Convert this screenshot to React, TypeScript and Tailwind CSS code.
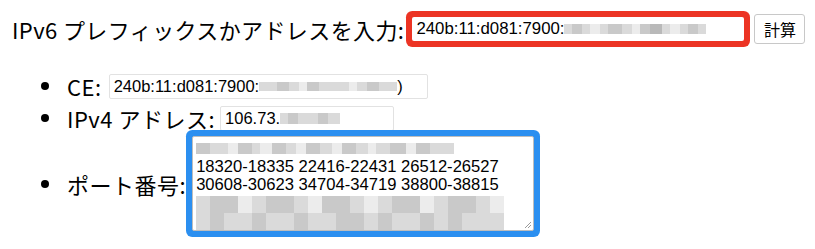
const shade = [
  "bg-white",
  "bg-[#ececec]",
  "bg-[#dadada]",
  "bg-[#c9c9c9]",
  "bg-[#b9b9b9]",
  "bg-[#a9a9a9]",
];

// a blurred run of text: each pair is [width px, shade index]
function Mosaic({ cells, h }: { cells: [number, number][]; h: string }) {
  return (
    <span className={`inline-flex ${h} align-middle`}>
      {cells.map(([w, s], i) => (
        <span key={i} className={`${shade[s]} h-full`} style={{ width: w }} />
      ))}
    </span>
  );
}

function MosaicGrid({ rows }: { rows: number[][] }) {
  return (
    <div className="flex flex-col">
      {rows.map((r, i) => (
        <div key={i} className="flex h-[17px]">
          {r.map((s, j) => (
            <span key={j} className={`${shade[s]} w-[14px] h-full`} />
          ))}
        </div>
      ))}
    </div>
  );
}

const labelFont = { fontFamily: '"Noto Sans CJK JP", "Noto Sans", sans-serif' };
const inputFont = { fontFamily: '"Liberation Sans", Arial, sans-serif' };

export default function App() {
  return (
    <div className="w-[815px] h-[249px] bg-white text-black overflow-hidden" style={labelFont}>
      <div className="flex items-center h-[36px] mt-[11px] pl-[12px]">
        <span className="text-[22px] leading-none tracking-[0.4px]">IPv6 プレフィックスかアドレスを入力:</span>
        <div
          className="ml-[8px] w-[332px] h-[24px] rounded-[2px] bg-white ring-[6px] ring-[#ec3424] flex items-center pl-[4px] text-[16.8px] overflow-hidden"
          style={inputFont}
        >
          <span>240b:11:d081:7900:</span>
          <Mosaic
            h="h-[10px]"
            cells={[[8, 2], [10, 3], [8, 2], [10, 1], [8, 2], [14, 3], [10, 2], [8, 1], [10, 3], [12, 4], [8, 2], [10, 1], [8, 2], [10, 3], [8, 2]]}
          />
        </div>
        <button
          className="ml-[10px] w-[51px] h-[30px] border border-[#c8c8c8] rounded-[3px] bg-white text-[16px] leading-none flex items-center justify-center"
          style={labelFont}
        >
          計算
        </button>
      </div>

      <ul className="mt-[23px] flex flex-col text-[22px] leading-none tracking-[0.5px]">
        <li className="flex items-center h-[32px]">
          <span className="ml-[41px] w-[8px] h-[8px] rounded-full bg-black" />
          <span className="ml-[18px]">CE:</span>
          <div
            className="ml-[7px] w-[319px] h-[25px] border border-[#e2e2e2] rounded-[2px] flex items-center pl-[4px] text-[16.5px] tracking-normal overflow-hidden"
            style={inputFont}
          >
            <span>240b:11:d081:7900:</span>
            <Mosaic
              h="h-[9px]"
              cells={[[10, 2], [8, 2], [12, 3], [10, 2], [8, 1], [12, 3], [8, 2], [10, 2], [12, 2], [8, 1], [10, 2], [12, 3], [10, 2], [8, 2]]}
            />
            <span>)</span>
          </div>
        </li>
        <li className="flex items-center h-[32px]">
          <span className="ml-[41px] w-[8px] h-[8px] rounded-full bg-black" />
          <span className="ml-[18px]">IPv4 アドレス:</span>
          <div
            className="ml-[5px] w-[174px] h-[25px] border border-[#e2e2e2] rounded-[2px] flex items-center pl-[4px] text-[16.5px] tracking-normal overflow-hidden"
            style={inputFont}
          >
            <span>106.73.</span>
            <Mosaic h="h-[11px]" cells={[[8, 2], [10, 3], [12, 2], [8, 2], [10, 3], [12, 2]]} />
          </div>
        </li>
        <li className="flex items-center h-[95px] mt-[2px]">
          <span className="ml-[41px] w-[8px] h-[8px] rounded-full bg-black" />
          <span className="ml-[18px]">ポート番号:</span>
          <div
            className="relative ml-[6px] w-[342px] h-[95px] border border-[#bdbdbd] rounded-[2px] bg-white ring-[6px] ring-[#2b8ff0] pl-[3px] pt-[2px] text-[16.6px] leading-[18.5px] tracking-normal"
            style={inputFont}
          >
            <div className="h-[18.5px] flex items-center">
              <Mosaic
                h="h-[11px]"
                cells={[[14, 3], [4, 2], [14, 2], [10, 1], [14, 3], [8, 2], [12, 1], [14, 3], [10, 2], [10, 1], [14, 3], [12, 2], [10, 1], [14, 3], [12, 2], [8, 1], [14, 2], [16, 3], [10, 1], [14, 3], [16, 2], [8, 2]]}
              />
            </div>
            <div>18320-18335 22416-22431 26512-26527</div>
            <div>30608-30623 34704-34719 38800-38815</div>
            <div className="mt-[1px]">
              <MosaicGrid
                rows={[
                  [2, 3, 3, 1, 2, 3, 3, 2, 1, 3, 3, 2, 1, 2, 3, 3, 1, 2, 3, 3, 2, 1],
                  [2, 3, 2, 2, 3, 2, 2, 3, 2, 2, 3, 3, 2, 3, 2, 2, 3, 2, 3, 2, 2, 2],
                ]}
              />
            </div>
            <svg className="absolute right-[1px] bottom-[1px]" width="9" height="9" viewBox="0 0 9 9">
              <path d="M8 2 L2 8 M8 5 L5 8" stroke="#9a9a9a" strokeWidth="1" />
            </svg>
          </div>
        </li>
      </ul>
    </div>
  );
}
